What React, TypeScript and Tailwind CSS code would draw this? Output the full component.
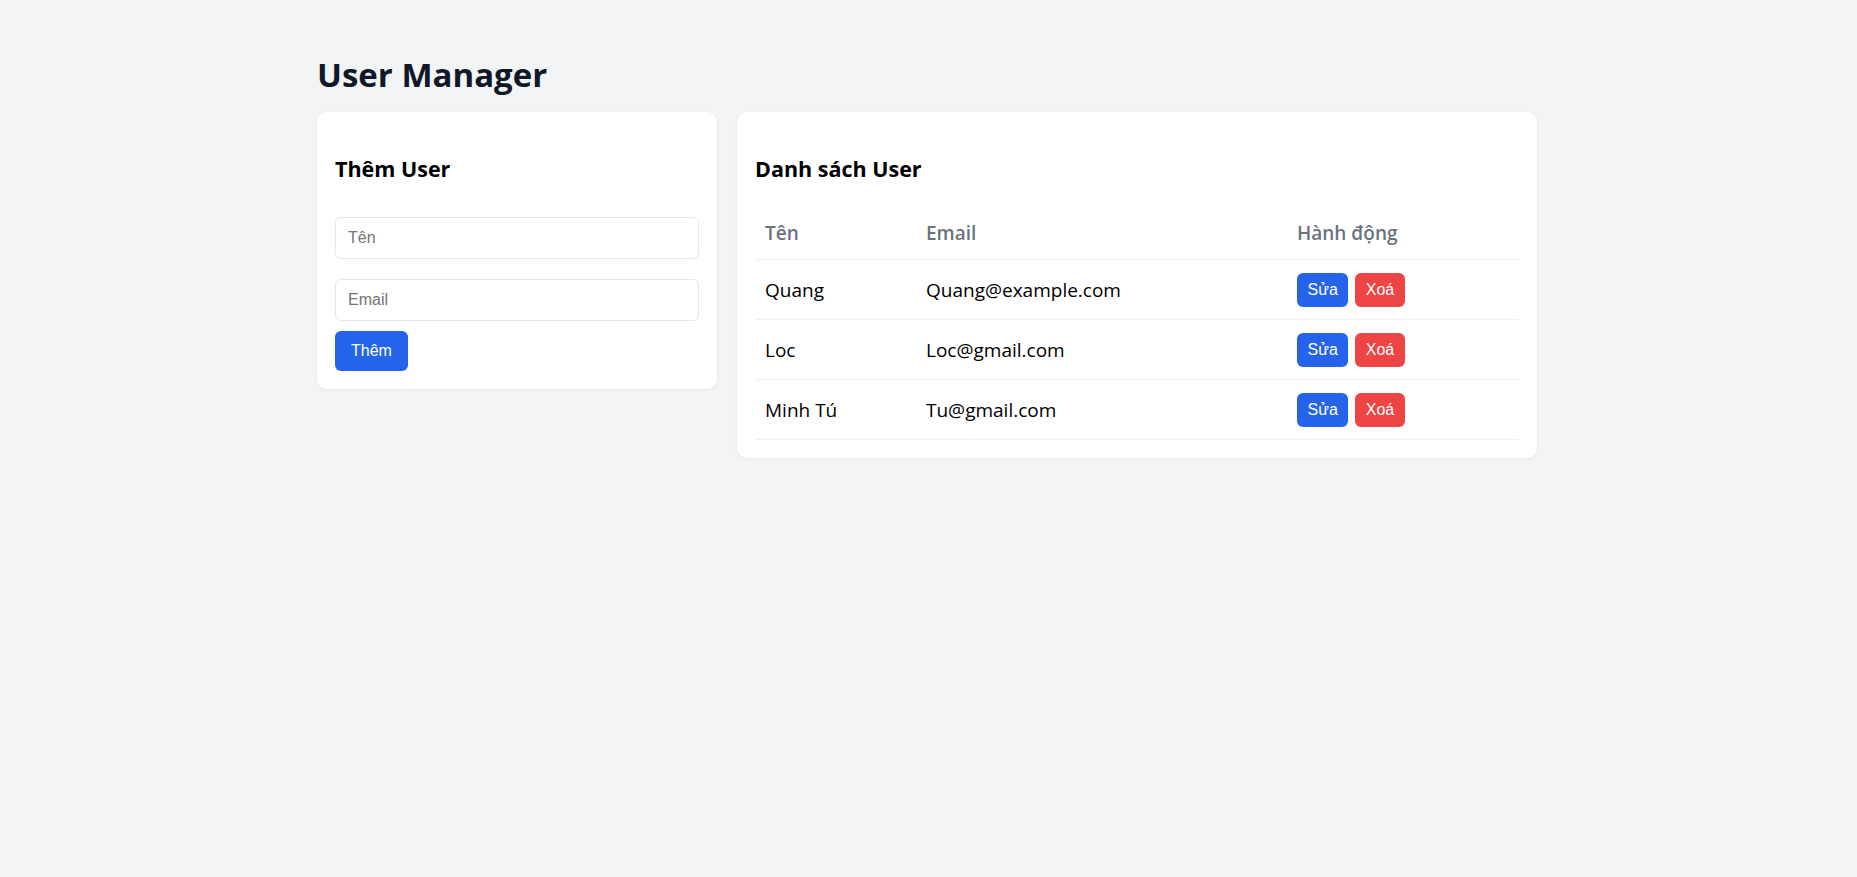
import React, { useState } from "react";

interface User { id: number; name: string; email: string }

const initialUsers: User[] = [
  { id: 1, name: "Quang", email: "Quang@example.com" },
  { id: 2, name: "Loc", email: "Loc@gmail.com" },
  { id: 3, name: "Minh Tú", email: "Tu@gmail.com" },
];

const sans = "font-['Open_Sans','Noto_Sans',sans-serif]";
const arial = "font-['Liberation_Sans',Arial,sans-serif]";

export default function App() {
  const [users, setUsers] = useState<User[]>(initialUsers);
  const [name, setName] = useState("");
  const [email, setEmail] = useState("");

  const addUser = () => {
    if (!name || !email) return;
    setUsers([...users, { id: Date.now(), name, email }]);
    setName("");
    setEmail("");
  };

  return (
    <div className={`min-h-screen bg-[#f3f4f6] ${sans}`}>
      <div className="w-[1223px] pr-[3px] mx-auto pt-[55px]">
        <h1 className="text-[33px] leading-10 font-bold text-[#111827] mb-[17px]">User Manager</h1>
        <div className="flex items-start gap-5">
          <div className="w-[400px] bg-white rounded-[10px] shadow-[0_1px_4px_rgba(0,0,0,0.06)] p-[18px]">
            <h2 className="text-[21.5px] leading-7 font-bold text-black mt-[25px] mb-[34px]">Thêm User</h2>
            <div className="flex flex-col">
              <input value={name} onChange={(e) => setName(e.target.value)} placeholder="Tên"
                className={`h-[42px] px-[12px] border border-[#e5e7eb] rounded-md text-base ${arial} placeholder:text-[#757575] focus:outline-none`} />
              <input value={email} onChange={(e) => setEmail(e.target.value)} placeholder="Email"
                className={`h-[42px] px-[12px] mt-5 border border-[#e5e7eb] rounded-md text-base ${arial} placeholder:text-[#757575] focus:outline-none`} />
              <div>
                <button onClick={addUser}
                  className={`mt-[10px] h-10 px-4 bg-[#2563eb] text-white rounded-md text-base ${arial}`}>Thêm</button>
              </div>
            </div>
          </div>

          <div className="w-[800px] bg-white rounded-[10px] shadow-[0_1px_4px_rgba(0,0,0,0.06)] p-[18px]">
            <h2 className="text-[21.5px] leading-7 font-bold text-black mt-[25px] mb-[24px]">Danh sách User</h2>
            <table className="w-full table-fixed border-collapse text-left">
              <thead>
                <tr className="border-b border-[#f0f0f0]">
                  <th className="w-[161px] px-2.5 py-3 text-[19px] leading-7 font-semibold text-[#6b7280]">Tên</th>
                  <th className="w-[371px] px-2.5 py-3 text-[19px] leading-7 font-semibold text-[#6b7280]">Email</th>
                  <th className="px-2.5 py-3 text-[19px] leading-7 font-semibold text-[#6b7280]">Hành động</th>
                </tr>
              </thead>
              <tbody>
                {users.map((u) => (
                  <tr key={u.id} className="border-b border-[#f0f0f0]">
                    <td className="px-2.5 py-[12.5px] text-[19px] leading-7 text-black">{u.name}</td>
                    <td className="px-2.5 py-[12.5px] text-[19px] leading-7 text-black">{u.email}</td>
                    <td className="px-2.5 py-[12.5px]">
                      <div className="flex gap-[7px]">
                        <button className={`h-[34px] px-[10.5px] bg-[#2563eb] text-white rounded-md text-base ${arial}`}>Sửa</button>
                        <button onClick={() => setUsers(users.filter((x) => x.id !== u.id))}
                          className={`h-[34px] px-[10.5px] bg-[#ef4444] text-white rounded-md text-base ${arial}`}>Xoá</button>
                      </div>
                    </td>
                  </tr>
                ))}
              </tbody>
            </table>
          </div>
        </div>
      </div>
    </div>
  );
}
